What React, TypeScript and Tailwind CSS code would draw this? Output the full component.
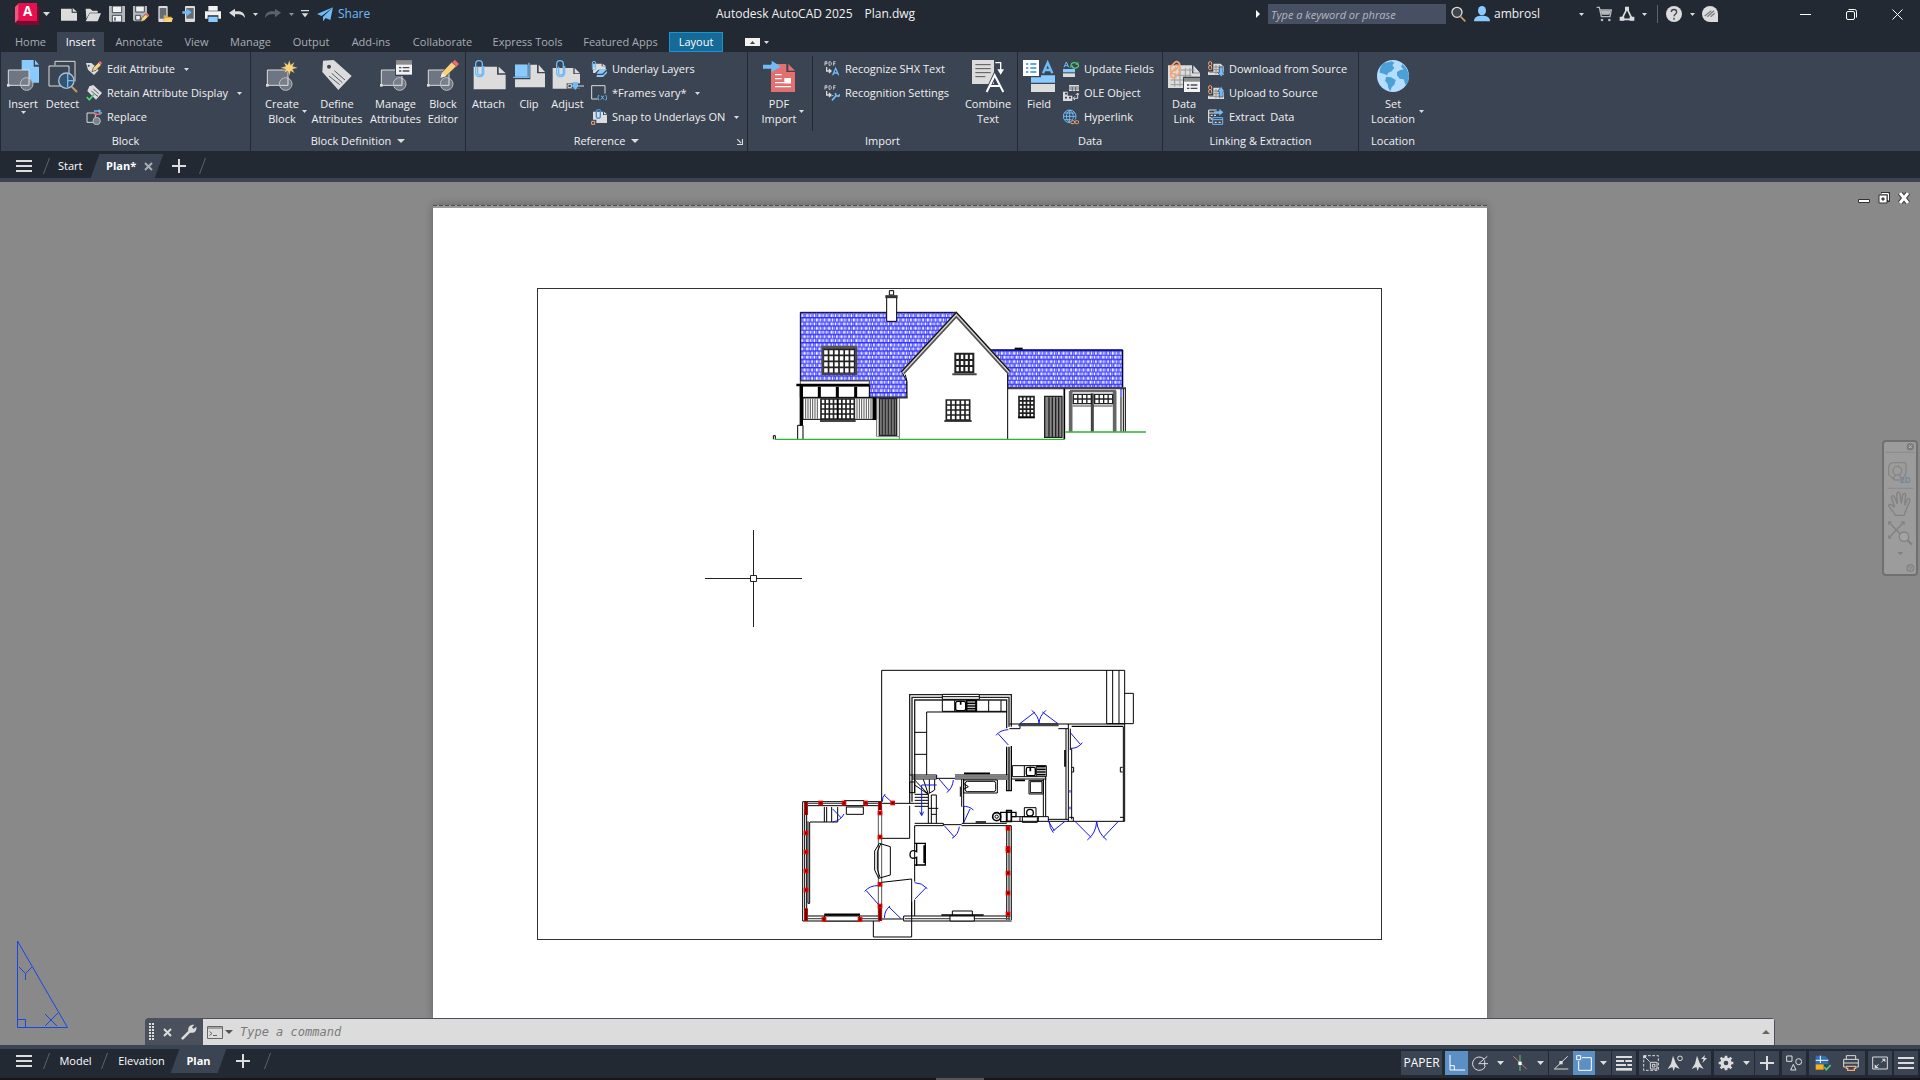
import type { ReactNode } from "react";

const LIGHT = "#dcdcdc";
const BLUE = "#6fbcf7";
const ORANGE = "#f0a878";
const PANEL = "#3b4453";

type IconProps = { children: ReactNode };

/** 16px icon on a 48-unit grid. */
function Small({ children }: IconProps) {
  return (
    <svg className="h-4 w-4 shrink-0" viewBox="0 0 48 48" fill="none" aria-hidden="true">
      {children}
    </svg>
  );
}

/** 32px icon on a 96-unit grid. */
function Large({ children }: IconProps) {
  return (
    <svg className="h-8 w-8 shrink-0 overflow-visible" viewBox="0 0 96 96" fill="none" aria-hidden="true">
      {children}
    </svg>
  );
}

function Caret() {
  return (
    <svg className="h-[3px] w-[5px] shrink-0" viewBox="0 0 5 3" aria-hidden="true">
      <path d="M0 0h5L2.500 3z" fill={LIGHT} />
    </svg>
  );
}

function BigCaret() {
  return (
    <svg className="h-1 w-2 shrink-0" viewBox="0 0 8 4" aria-hidden="true">
      <path d="M0 0h8L4 4z" fill={LIGHT} />
    </svg>
  );
}

/* Pieces shared by several ribbon icons */

const blockShape = (
  <>
    <path d="M4 30H66V76H4z" fill="#6f7683" stroke={LIGHT} strokeWidth="3" />
    <path d="M0 72h8v8H0z" fill={LIGHT} />
    <circle cx="59" cy="72" r="19" fill="#7a818d" fillOpacity=".85" stroke="#b9bdc4" strokeWidth="3" />
    <path d="M42 76H66V54" stroke={LIGHT} strokeWidth="3" />
  </>
);

const pageShape = <path d="M2 20H72V44H98V88H2zM77 20L98 40H77z" fill={LIGHT} />;

const clipShape = (
  <path
    d="M14 20V38a7 7 0 0 0 14 0V12a10 10 0 0 0-20 0V42a13 13 0 0 0 24 0V18"
    stroke={BLUE}
    strokeWidth="4"
  />
);

const chainShape = (
  <path
    d="M18 34l14-14a8 8 0 0 0-12-12L8 20v14a10 10 0 0 0 16 6M24 22L10 38a9 9 0 0 0 14 12l12-14V22a10 10 0 0 0-16-4"
    stroke={ORANGE}
    strokeWidth="5"
  />
);

/* Ribbon: large icons */

const insertIcon = (
  <Large>
    <path d="M44 0H80V20H96V68H44zM84 0L96 14H84z" fill="#8acbff" />
    {blockShape}
  </Large>
);
const detectIcon = (
  <Large>
    <path d="M24 4H84V64M24 4V16M6 18H66V78H6z" stroke={LIGHT} strokeWidth="3" />
    <circle cx="58" cy="62" r="23" fill="#35536f" stroke="#a9c3da" strokeWidth="4" />
    <path d="M62 42V82M62 62H80" stroke={BLUE} strokeWidth="4" />
    <path d="M74 80L90 96" stroke="#c99a63" strokeWidth="6" />
  </Large>
);
const createBlockIcon = (
  <Large>
    {blockShape}
    <path
      d="M70 0l4 14 12-8-6 13 16 4-16 5 6 12-12-7-4 15-5-15-12 7 6-12-16-5 16-4-6-13 12 8z"
      fill="#f9d27a"
      stroke={PANEL}
      strokeWidth="1"
    />
  </Large>
);
const defineIcon = (
  <Large>
    <path d="M6 2L38 0 92 48 52 90 4 36z" fill={LIGHT} />
    <circle cx="24" cy="20" r="6" fill={PANEL} />
    <path d="M40 32L72 60M32 40L64 68M24 48L56 74" stroke="#555d69" strokeWidth="3" />
  </Large>
);
const manageIcon = (
  <Large>
    {blockShape}
    <path d="M45 0H98V48H45z" fill={PANEL} />
    <path d="M48 2H96V44H48z" fill="#f2f2f2" />
    <path d="M48 2H96V14H48z" fill="#8b8b8b" />
    <path d="M57 23h7M68 23h20M57 33h7M68 33h20" stroke="#444c58" strokeWidth="4" />
  </Large>
);
const editorIcon = (
  <Large>
    {blockShape}
    <path d="M40 54l5-17L74 6l14 13-31 30z" fill="#f9d27a" stroke={PANEL} strokeWidth="2" />
    <path d="M40 54l5-17 12 12z" fill="#e8e8e8" />
    <path d="M76 6l8-6 12 12-8 8z" fill="#f26a6a" />
  </Large>
);
const attachIcon = (
  <Large>
    {pageShape}
    {clipShape}
  </Large>
);
const clipIcon = (
  <Large>
    <path d="M6 14H72V40H96V82H6zM77 14L96 36H77z" fill={LIGHT} />
    <path d="M6 14H44V50H6z" fill="#8acbff" />
    <path d="M48 8V54H0" stroke={PANEL} strokeWidth="8" />
    <path d="M48 8V52H0" stroke={BLUE} strokeWidth="4" />
  </Large>
);
const adjustIcon = (
  <Large>
    <path d="M2 24H64V42H84V86H2zM68 24L84 40H68z" fill={LIGHT} />
    <g transform="translate(6 0)">{clipShape}</g>
    <path d="M44 70H98V86H44z" fill={PANEL} />
    <path d="M48 73H58V83H48zM58 78H96" stroke={LIGHT} strokeWidth="3" />
    <path d="M62 66H78V80L70 90 62 80z" fill={BLUE} />
  </Large>
);
const pdfIcon = (
  <Large>
    <path d="M24 12H70V36H96V96H24zM76 12L96 32H76z" fill="#e27070" />
    <path d="M0 14H26V2L54 20 26 36V26H0z" fill={BLUE} />
    <path d="M36 44H56M36 56H56M36 68H84M36 80H84" stroke="#fff" strokeWidth="4" />
    <path d="M64 54H84V70H64z" fill="#fff" />
  </Large>
);
const combineIcon = (
  <Large>
    <path d="M0 0H66V72H0z" fill={LIGHT} />
    <path d="M10 14H56M10 26H56M10 38H56M10 50H40" stroke="#555" strokeWidth="3" />
    <path d="M70 8H86V32" stroke="#fff" strokeWidth="4" />
    <path d="M76 28H96L86 44z" fill="#fff" />
    <path d="M44 96L68 46 94 96M52 80H86" stroke={PANEL} strokeWidth="12" />
    <path d="M44 96L68 46 94 96M54 78H84" stroke="#fff" strokeWidth="6" />
  </Large>
);
const fieldIcon = (
  <Large>
    <path d="M0 0H48V48H0z" fill="#fff" />
    <path d="M9 12h7M9 24h7M9 36h7M22 12h18M22 24h18M22 36h18" stroke="#2f8fe0" strokeWidth="4" />
    <path d="M60 40L74 8 88 40M66 30H82" stroke={BLUE} strokeWidth="7" />
    <path d="M54 46H96V68H24V52H54z" fill="#8acbff" />
    <path d="M24 72H96V96H24z" fill={LIGHT} />
  </Large>
);
const dataLinkIcon = (
  <Large>
    <path d="M0 16H72V40H96V84H0zM76 16L96 38H76z" fill={LIGHT} />
    <path d="M30 30H80M20 46H70M8 60H60M8 74H50M20 50V80M36 24V80M52 24V80M66 24V50" stroke="#9a9a9a" strokeWidth="3" />
    {chainShape}
    <path d="M45 50H98V98H45z" fill={PANEL} />
    <path d="M48 54H96V96H48z" fill="#f2f2f2" />
    <path d="M48 54H96V65H48z" fill="#8b8b8b" />
    <path d="M57 75h7M68 75h20M57 85h7M68 85h20" stroke="#444c58" strokeWidth="4" />
  </Large>
);
const globeIcon = (
  <Large>
    <circle cx="48" cy="48" r="48" fill="#b3deff" />
    <path
      d="M20 10L44 4l8 4-6 8 6 8-8 10-10 4-4 8-8-4-14-4C8 24 14 14 20 10zM28 50l14 2 14 8-4 14-8 8-4 12-6-10-2-12-8-10zM60 36l10-6 10-2-8-8 4-8c10 8 18 20 20 34l-2 20-8 10-6-18-12-2-8-10z"
      fill="#4d9fd8"
    />
  </Large>
);

/* Ribbon: small icons */

const editAttrIcon = (
  <Small>
    <path d="M0 6H16L26 14 38 28 24 42 6 26z" fill={LIGHT} />
    <circle cx="8" cy="14" r="3" fill={PANEL} />
    <path d="M18 32l4-12L38 4l8 8-16 16z" fill="#f9d27a" stroke={PANEL} strokeWidth="2" />
    <path d="M38 4l4-4 6 6-4 6z" fill="#f26a6a" />
  </Small>
);
const retainIcon = (
  <Small>
    <path d="M10 4L22 0 48 24 30 44 4 18z" fill={LIGHT} />
    <path d="M22 12L38 26M16 18L32 32M30 30l6 4" stroke="#555d69" strokeWidth="3" />
    <path d="M2 36l8 8 14-16" stroke="#4fce74" strokeWidth="5" />
  </Small>
);
const replaceIcon = (
  <Small>
    <path d="M3 12H28V40H3z" stroke={LIGHT} strokeWidth="3" />
    <circle cx="32" cy="36" r="11" fill="#7a818d" stroke="#b9bdc4" strokeWidth="3" />
    <path d="M24 6H42M48 12L38 12" stroke={BLUE} strokeWidth="4" />
    <path d="M44 16H28" stroke="#f26a6a" strokeWidth="4" />
    <path d="M38 0l8 6-8 5z" fill={BLUE} />
    <path d="M32 10l-8 6 8 6z" fill="#f26a6a" />
  </Small>
);
const layersIcon = (
  <Small>
    <path d="M6 8H32V16H44V26H22L12 36H6zM35 8l9 7h-9z" fill={LIGHT} />
    <path d="M28 24H48L34 38H16zM18 42H36L48 30V36L36 48H16z" fill="#8acbff" />
    <path d="M4 6V22a4 4 0 0 0 10 0V6a4 4 0 0 0-10 0M9 8V20" stroke={BLUE} strokeWidth="3" />
  </Small>
);
const framesIcon = (
  <Small>
    <path d="M20 42H2V2H42V26" stroke={LIGHT} strokeWidth="3" />
    <path d="M24 30c-4 6-4 10 0 16M44 30c4 6 4 10 0 16M30 33c6 0 4 10 10 10M39 33c-6 0-4 10-10 10" stroke={BLUE} strokeWidth="3" />
  </Small>
);
const snapIcon = (
  <Small>
    <path d="M6 8H36V18H48V42H16V32H6zM39 8l9 8h-9z" fill={LIGHT} />
    <path d="M16 4V22a6 6 0 0 0 12 0V6a5 5 0 0 0-10 0" stroke="#3f8fd0" strokeWidth="4" />
    <path d="M2 37H11V46H2z" stroke={ORANGE} strokeWidth="3" />
  </Small>
);
const pdfTag = (
  <path d="M3 14V2H9V8H3M15 2V13M15 2.500H19L22 5V10L19 13H15M29 14V2H35M29 8H34" stroke={LIGHT} strokeWidth="2.500" />
);
const shxIcon = (
  <Small>
    {pdfTag}
    <path d="M8 18V30H20M15 24l6 6-6 6" stroke={LIGHT} strokeWidth="4" />
    <path d="M26 43L35 22 44 43M29 36H41" stroke={BLUE} strokeWidth="4" />
  </Small>
);
const recogIcon = (
  <Small>
    {pdfTag}
    <path d="M8 18V30H20M15 24l6 6-6 6" stroke={LIGHT} strokeWidth="4" />
    <path d="M24 46L38 30M34 24l2 8 8 2 4-6" stroke={BLUE} strokeWidth="5" />
    <path d="M24 34l4-4" stroke={LIGHT} strokeWidth="3" />
  </Small>
);
const updateIcon = (
  <Small>
    <path d="M3 19L10 3 17 19M5 14H15" stroke={BLUE} strokeWidth="3" />
    <path d="M24 12a10 8 0 0 1 18-4M46 10a10 8 0 0 1-19 6" stroke="#4fce74" strokeWidth="4" />
    <path d="M46 2v9h-9zM22 22v-9h9z" fill="#4fce74" />
    <path d="M0 24H36V34H0z" fill="#8acbff" />
    <path d="M0 37H36V48H0z" fill={LIGHT} />
  </Small>
);
const oleIcon = (
  <Small>
    <path d="M18 0H48V18H18z" fill={LIGHT} />
    <path d="M18 6H48M18 12H48M28 6V18M38 6V18" stroke={PANEL} strokeWidth="2" />
    <path d="M0 20H14V32H28V48H0z" fill={LIGHT} />
    <path d="M6 26h6M6 38h6M18 38h6" stroke={PANEL} strokeWidth="5" />
    <path d="M32 40H44V26M38 30l6-6 4 6M36 34l-6 6 6 5" stroke={LIGHT} strokeWidth="3" />
  </Small>
);
const hyperIcon = (
  <Small>
    <circle cx="20" cy="22" r="19" stroke={BLUE} strokeWidth="3" />
    <path d="M20 3V41M2 22H38M5 12H35M5 32H26M20 3c-13 12-13 26 0 38M20 3c13 12 13 20 8 30" stroke={BLUE} strokeWidth="3" />
    <path d="M22 32H48V48H20z" fill={PANEL} />
    <rect x="23" y="35" width="12" height="9" rx="4" stroke={ORANGE} strokeWidth="3" />
    <rect x="36" y="35" width="11" height="9" rx="4" stroke={ORANGE} strokeWidth="3" />
  </Small>
);
const linkedSheet = (
  <>
    <path d="M16 8H38L48 18V42H0V32H16z" fill={LIGHT} />
    <path d="M16 18H44M16 26H44M4 34H44M24 12V40M34 12V40" stroke="#8e8e8e" strokeWidth="3" />
    <rect x="2" y="2" width="9" height="12" rx="4" stroke={ORANGE} strokeWidth="3" />
    <rect x="2" y="14" width="9" height="12" rx="4" stroke={ORANGE} strokeWidth="3" />
  </>
);
const downloadIcon = (
  <Small>
    {linkedSheet}
    <path d="M34 18H45V34H50L39.500 48 29 34H34z" fill={BLUE} stroke={PANEL} strokeWidth="2" />
  </Small>
);
const uploadIcon = (
  <Small>
    {linkedSheet}
    <path d="M34 36H45V20H50L39.500 4 29 20H34z" fill={BLUE} stroke={PANEL} strokeWidth="2" />
  </Small>
);
const extractIcon = (
  <Small>
    <path d="M26 3H2V40H12M2 12H36M2 26H10M2 3V40" stroke={LIGHT} strokeWidth="3" />
    <path d="M18 7H34V0L46 10 34 20V13H18z" fill={BLUE} />
    <path d="M8 19h6M18 19h6M8 30h4" stroke={LIGHT} strokeWidth="4" />
    <path d="M14 26H44V46H14zM14 32H44" stroke={BLUE} strokeWidth="3" />
    <path d="M20 40h6M32 40h6" stroke={LIGHT} strokeWidth="4" />
  </Small>
);

type ToolProps = {
  icon: ReactNode;
  lines: string[];
  width: string;
  below?: boolean;
  side?: boolean;
};

function BigTool({ icon, lines, width, below, side }: ToolProps) {
  return (
    <button type="button" className={`relative flex shrink-0 flex-col items-center pt-2 ${width}`}>
      {icon}
      <span className="mt-1 flex flex-col items-center leading-[15px] whitespace-nowrap">
        {lines.map((line) => (
          <span key={line}>{line}</span>
        ))}
      </span>
      {below && <Caret />}
      {side && (
        <span className="absolute top-[58px] right-0">
          <Caret />
        </span>
      )}
    </button>
  );
}

type RowProps = { icon: ReactNode; label: string; caret?: boolean };

function ToolRow({ icon, label, caret }: RowProps) {
  return (
    <button type="button" className="flex h-6 items-center gap-[5px] whitespace-pre">
      {icon}
      <span>{label}</span>
      {caret && (
        <span className="ml-1">
          <Caret />
        </span>
      )}
    </button>
  );
}

type PanelProps = {
  title: string;
  width: string;
  expandable?: boolean;
  launcher?: boolean;
  children: ReactNode;
};

function RibbonPanel({ title, width, expandable, launcher, children }: PanelProps) {
  return (
    <section className={`relative flex shrink-0 flex-col border-r border-[#222933] ${width}`}>
      <div className="flex h-[79px]">{children}</div>
      <h2 className="flex h-5 items-center justify-center gap-1.5 whitespace-nowrap">
        {title}
        {expandable && <BigCaret />}
      </h2>
      {launcher && (
        <button type="button" aria-label={`${title} settings`} className="absolute right-1 bottom-1.5">
          <svg className="h-[6px] w-[6px]" viewBox="0 0 6 6" aria-hidden="true">
            <path d="M0 0l4 4M5.500 0V5.500H0" stroke={LIGHT} strokeWidth="1.200" fill="none" />
          </svg>
        </button>
      )}
    </section>
  );
}

function ToolColumn({ children }: { children: ReactNode }) {
  return <div className="flex flex-col items-start pt-[5px]">{children}</div>;
}

const TABS = [
  { name: "Home", width: "w-[53px]" },
  { name: "Insert", width: "w-[47px]" },
  { name: "Annotate", width: "w-[70px]" },
  { name: "View", width: "w-[45px]" },
  { name: "Manage", width: "w-[63px]" },
  { name: "Output", width: "w-[58px]" },
  { name: "Add-ins", width: "w-[62px]" },
  { name: "Collaborate", width: "w-[81px]" },
  { name: "Express Tools", width: "w-[89px]" },
  { name: "Featured Apps", width: "w-[97px]" },
  { name: "Layout", width: "w-[54px]" },
];

function IconButton({ label, width, children }: { label: string; width: string; children: ReactNode }) {
  return (
    <button type="button" aria-label={label} className={`flex shrink-0 items-center justify-center ${width}`}>
      {children}
    </button>
  );
}

function TitleBar() {
  return (
    <header className="flex h-7 items-center">
      <div className="flex w-[716px] shrink-0 items-center pl-[15px]">
        <IconButton label="Application menu" width="w-6">
          <svg className="h-[22px] w-6" viewBox="0 0 72 66" aria-hidden="true">
            <path d="M0 12L12 0V48L0 60z" fill="#f0557d" />
            <path d="M12 52H62V6l10 6V66H12L0 60z" fill="#7a0b2e" />
            <path d="M10 0H66V54H10z" fill="#e51050" />
            <text x="38" y="40" textAnchor="middle" fontSize="40" fontWeight="700" fill="#fff" fontFamily="Open Sans, sans-serif">
              A
            </text>
          </svg>
        </IconButton>
        <IconButton label="Open menu" width="mr-1 w-3.5">
          <svg className="h-1 w-[7px]" viewBox="0 0 7 4" aria-hidden="true">
            <path d="M0 0h7L3.500 4z" fill={LIGHT} />
          </svg>
        </IconButton>
        <IconButton label="New" width="w-6">
          <Small>
            <path d="M0 8H32V20H48V44H0zM35 6L48 17H35z" fill={LIGHT} />
          </Small>
        </IconButton>
        <IconButton label="Open" width="w-6">
          <Small>
            <path d="M2 8H16L22 14H38V20H14L4 38z" fill={LIGHT} />
            <path d="M14 22H48L38 46H2z" fill={LIGHT} />
          </Small>
        </IconButton>
        <IconButton label="Save" width="w-6">
          <Small>
            <path d="M0 0H48V48H4L0 44z" fill="#b5b8bd" />
            <path d="M10 0H38V20H10zM10 28H38V48H10z" fill="#f1f1f1" stroke="#444b56" strokeWidth="3" />
            <path d="M18 34v10" stroke="#444b56" strokeWidth="4" />
          </Small>
        </IconButton>
        <IconButton label="Save As" width="w-6">
          <Small>
            <path d="M0 0H42V26L24 46H4L0 42z" fill="#b5b8bd" />
            <path d="M8 0H34V18H8zM8 28H22V42H8z" fill="#f1f1f1" stroke="#444b56" strokeWidth="3" />
            <path d="M22 48l4-12 12-12 8 8-12 12z" fill="#f9d27a" stroke="#222933" strokeWidth="2" />
            <path d="M38 24l4-4 8 8-4 4z" fill="#f26a6a" />
          </Small>
        </IconButton>
        <IconButton label="Open from Web & Mobile" width="w-6">
          <Small>
            <rect x="4" y="0" width="28" height="48" rx="3" fill={LIGHT} />
            <path d="M8 6H28V38H8z" fill="#666c75" />
            <path d="M20 28H30L34 32H44V48H20z" fill="#d9a94a" />
            <path d="M24 36H48L44 48H20z" fill="#f9d27a" />
          </Small>
        </IconButton>
        <IconButton label="Save to Web & Mobile" width="w-6">
          <Small>
            <rect x="12" y="0" width="30" height="48" rx="3" fill={LIGHT} />
            <path d="M16 6H38V38H16z" fill="#666c75" />
            <path d="M4 16H18V8L32 19 18 30V23H4z" fill={BLUE} />
          </Small>
        </IconButton>
        <IconButton label="Plot" width="w-6">
          <Small>
            <path d="M10 0H38V14H10zM0 16H48V38H40V28H8V38H0z" fill="#f1f1f1" />
            <path d="M10 32H38V48H10z" fill="#8acbff" />
          </Small>
        </IconButton>
        <IconButton label="Undo" width="w-6">
          <Small>
            <path d="M0 20L18 8V16H28C40 16 48 24 48 36 42 28 36 25 28 25H18V34z" fill={LIGHT} />
          </Small>
        </IconButton>
        <IconButton label="Undo history" width="w-3">
          <Caret />
        </IconButton>
        <IconButton label="Redo" width="w-6">
          <Small>
            <path d="M48 20L30 8V16H20C8 16 0 24 0 36 6 28 12 25 20 25H30V34z" fill="#5b626d" />
          </Small>
        </IconButton>
        <IconButton label="Redo history" width="w-3">
          <svg className="h-[3px] w-[5px]" viewBox="0 0 5 3" aria-hidden="true">
            <path d="M0 0h5L2.500 3z" fill="#8b9098" />
          </svg>
        </IconButton>
        <IconButton label="Customize Quick Access Toolbar" width="w-4">
          <svg className="h-2 w-2" viewBox="0 0 24 24" aria-hidden="true">
            <path d="M0 0H24V4H0zM2 10H22L12 22z" fill={LIGHT} />
          </svg>
        </IconButton>
        <button type="button" className="ml-1 flex items-center gap-[5px] text-xs text-[#6fbcf7]">
          <Small>
            <path d="M48 4L0 24 14 30zM48 4L18 32V46L26 36 40 42z" fill={BLUE} />
          </Small>
          Share
        </button>
      </div>
      <h1 className="flex gap-3 text-xs whitespace-nowrap">
        <span>Autodesk AutoCAD 2025</span>
        <span>Plan.dwg</span>
      </h1>
      <div className="ml-auto flex items-center">
        <svg className="mr-2 h-2 w-1" viewBox="0 0 4 8" aria-hidden="true">
          <path d="M0 0L4 4 0 8z" fill="#fff" />
        </svg>
        <input
          type="text"
          aria-label="Search"
          placeholder="Type a keyword or phrase"
          className="h-5 w-[178px] bg-[#474f62] px-[3px] italic placeholder:text-[#b4b8c0]"
        />
        <IconButton label="Search" width="w-6">
          <Small>
            <circle cx="21" cy="19" r="15" fill="#3f444c" stroke={LIGHT} strokeWidth="4" />
            <path d="M32 32L46 46" stroke="#c99a63" strokeWidth="5" />
          </Small>
        </IconButton>
        <button type="button" className="flex w-24 items-center gap-1 pl-1">
          <Small>
            <ellipse cx="24" cy="14" rx="12" ry="14" fill="#8acbff" />
            <path d="M0 46C0 34 8 30 18 29H30C40 30 48 34 48 46z" fill="#8acbff" />
          </Small>
          <span className="text-xs">ambrosl</span>
        </button>
        <IconButton label="Account menu" width="w-[30px]">
          <Caret />
        </IconButton>
        <IconButton label="App Store" width="w-4">
          <Small>
            <path d="M2 4H10L16 32H42L46 12H12" stroke="#b5b8bd" strokeWidth="4" />
            <path d="M14 14H44L40 26H17z" fill="#b5b8bd" />
            <circle cx="18" cy="42" r="4" fill="#b5b8bd" />
            <circle cx="40" cy="42" r="4" fill="#b5b8bd" />
          </Small>
        </IconButton>
        <IconButton label="Autodesk App" width="w-[30px]">
          <Small>
            <path d="M24 8L8 40H40z" stroke={LIGHT} strokeWidth="5" />
            <path d="M18 2H30V14H18zM2 32H16V44H2zM32 32H46V44H32z" fill={LIGHT} />
          </Small>
        </IconButton>
        <IconButton label="Autodesk App menu" width="w-[5px]">
          <Caret />
        </IconButton>
        <span className="mr-2 ml-2.5 h-[18px] w-px bg-[#5b626d]" />
        <IconButton label="Help" width="w-4">
          <Small>
            <circle cx="24" cy="24" r="24" fill={LIGHT} />
            <path d="M16 18C16 8 32 8 32 18 32 25 24 24 24 31M24 35v6" stroke="#3b4453" strokeWidth="4" />
          </Small>
        </IconButton>
        <IconButton label="Help menu" width="w-5">
          <Caret />
        </IconButton>
        <IconButton label="Feedback" width="w-4">
          <Small>
            <path d="M24 0A24 24 0 0 0 24 48H48V24A24 24 0 0 0 24 0z" fill={LIGHT} />
            <path d="M8 30L28 14M16 32L36 14M26 32L38 22" stroke="#7b8088" strokeWidth="4" />
          </Small>
        </IconButton>
        <div className="ml-16 flex">
          <IconButton label="Minimize" width="w-[46px]">
            <svg className="h-[11px] w-[11px]" viewBox="0 0 11 11" aria-hidden="true">
              <path d="M0 5h11v1H0z" fill="#fff" />
            </svg>
          </IconButton>
          <IconButton label="Restore" width="w-[46px]">
            <svg className="h-[11px] w-[11px]" viewBox="0 0 11 11" fill="none" aria-hidden="true">
              <path d="M2.500.5h6a2 2 0 0 1 2 2v6" stroke="#fff" />
              <rect x=".5" y="2.500" width="8" height="8" rx="1.500" stroke="#fff" />
            </svg>
          </IconButton>
          <IconButton label="Close" width="w-[46px]">
            <svg className="h-[11px] w-[11px]" viewBox="0 0 11 11" aria-hidden="true">
              <path d="M.5.5l10 10M10.500.5l-10 10" stroke="#fff" />
            </svg>
          </IconButton>
        </div>
      </div>
    </header>
  );
}

function RibbonTabs() {
  return (
    <nav className="flex h-5 items-stretch pl-1">
      {TABS.map((tab) => {
        const look =
          tab.name === "Insert"
            ? "bg-[#3b4453] text-white"
            : tab.name === "Layout"
              ? "border border-[#1795d4] bg-[#166a98] text-white"
              : "text-[#a9adb3]";
        return (
          <button
            key={tab.name}
            type="button"
            className={`flex shrink-0 items-center justify-center whitespace-nowrap ${tab.width} ${look}`}
          >
            {tab.name}
          </button>
        );
      })}
      <button type="button" aria-label="Minimize ribbon" className="ml-[22px] flex items-center gap-1">
        <span className="flex h-2 w-[15px] items-center justify-center bg-[#f1f1f1]">
          <svg className="h-[3px] w-[5px]" viewBox="0 0 5 3" aria-hidden="true">
            <path d="M0 3h5L2.500 0z" fill="#444" />
          </svg>
        </span>
        <Caret />
      </button>
    </nav>
  );
}

function Ribbon() {
  return (
    <div className="flex h-[99px] overflow-hidden border-l border-[#222933] bg-[#3b4453] text-[#f1f1f1]">
      <RibbonPanel title="Block" width="w-[250px]">
        <BigTool icon={insertIcon} lines={["Insert"]} width="w-[44px]" below />
        <BigTool icon={detectIcon} lines={["Detect"]} width="w-[35px]" />
        <span className="w-1.5 shrink-0" />
        <ToolColumn>
          <ToolRow icon={editAttrIcon} label="Edit Attribute" caret />
          <ToolRow icon={retainIcon} label="Retain Attribute Display" caret />
          <ToolRow icon={replaceIcon} label="Replace" />
        </ToolColumn>
      </RibbonPanel>
      <RibbonPanel title="Block Definition" width="w-[215px]" expandable>
        <span className="w-1.5 shrink-0" />
        <BigTool icon={createBlockIcon} lines={["Create", "Block"]} width="w-[50px]" side />
        <BigTool icon={defineIcon} lines={["Define", "Attributes"]} width="w-[60px]" />
        <BigTool icon={manageIcon} lines={["Manage", "Attributes"]} width="w-[57px]" />
        <BigTool icon={editorIcon} lines={["Block", "Editor"]} width="w-[38px]" />
      </RibbonPanel>
      <RibbonPanel title="Reference" width="w-[282px]" expandable launcher>
        <BigTool icon={attachIcon} lines={["Attach"]} width="w-[45px]" />
        <BigTool icon={clipIcon} lines={["Clip"]} width="w-[36px]" />
        <BigTool icon={adjustIcon} lines={["Adjust"]} width="w-[41px]" />
        <span className="w-[3px] shrink-0" />
        <ToolColumn>
          <ToolRow icon={layersIcon} label="Underlay Layers" />
          <ToolRow icon={framesIcon} label="*Frames vary*" caret />
          <ToolRow icon={snapIcon} label="Snap to Underlays ON" caret />
        </ToolColumn>
      </RibbonPanel>
      <RibbonPanel title="Import" width="w-[270px]">
        <span className="w-1.5 shrink-0" />
        <BigTool icon={pdfIcon} lines={["PDF", "Import"]} width="w-[50px]" side />
        <span className="mt-1 mr-[11px] ml-2 w-px shrink-0 bg-[#222933]" />
        <div className="w-[140px]">
          <ToolColumn>
            <ToolRow icon={shxIcon} label="Recognize SHX Text" />
            <ToolRow icon={recogIcon} label="Recognition Settings" />
          </ToolColumn>
        </div>
        <BigTool icon={combineIcon} lines={["Combine", "Text"]} width="w-[48px]" />
      </RibbonPanel>
      <RibbonPanel title="Data" width="w-[145px]">
        <BigTool icon={fieldIcon} lines={["Field"]} width="w-[42px]" />
        <span className="w-[3px] shrink-0" />
        <ToolColumn>
          <ToolRow icon={updateIcon} label="Update Fields" />
          <ToolRow icon={oleIcon} label="OLE Object" />
          <ToolRow icon={hyperIcon} label="Hyperlink" />
        </ToolColumn>
      </RibbonPanel>
      <RibbonPanel title="Linking & Extraction" width="w-[196px]">
        <BigTool icon={dataLinkIcon} lines={["Data", "Link"]} width="w-[42px]" />
        <span className="w-[3px] shrink-0" />
        <ToolColumn>
          <ToolRow icon={downloadIcon} label="Download from Source" />
          <ToolRow icon={uploadIcon} label="Upload to Source" />
          <ToolRow icon={extractIcon} label="Extract  Data" />
        </ToolColumn>
      </RibbonPanel>
      <section className="flex w-[68px] shrink-0 flex-col">
        <div className="flex h-[79px] justify-center">
          <BigTool icon={globeIcon} lines={["Set", "Location"]} width="w-[62px]" side />
        </div>
        <h2 className="flex h-5 items-center justify-center">Location</h2>
      </section>
    </div>
  );
}

function Slash() {
  return (
    <svg className="h-4 w-[7px] shrink-0" viewBox="0 0 7 16" aria-hidden="true">
      <path d="M6.500 0L.5 16" stroke="#5b626d" />
    </svg>
  );
}

function Burger() {
  return (
    <svg className="h-3 w-4" viewBox="0 0 16 12" aria-hidden="true">
      <path d="M0 0h16v2H0zM0 5h16v2H0zM0 10h16v2H0z" fill={LIGHT} />
    </svg>
  );
}

function Plus() {
  return (
    <svg className="h-3.5 w-3.5" viewBox="0 0 14 14" aria-hidden="true">
      <path d="M6 0h2v6h6v2H8v6H6V8H0V6h6z" fill={LIGHT} />
    </svg>
  );
}

function FileTabs() {
  return (
    <nav className="flex h-[31px] items-start border-b-4 border-[#3b4453] pt-[3px] text-white">
      <div className="flex h-6 items-center">
        <IconButton label="File tab menu" width="w-[43px] pl-[5px]">
          <Burger />
        </IconButton>
        <Slash />
        <button type="button" className="flex w-[45px] items-center pl-2">
          Start
        </button>
        <div className="relative flex h-6 w-[64px] items-center gap-2 pl-[11px]">
          <span className="absolute inset-0 -skew-x-[20deg] bg-[#3b4453]" />
          <button type="button" className="relative font-bold">
            Plan*
          </button>
          <button type="button" aria-label="Close Plan" className="relative">
            <svg className="h-[9px] w-[9px]" viewBox="0 0 9 9" aria-hidden="true">
              <path d="M1 1l7 7M8 1l-7 7" stroke="#a9adb3" strokeWidth="2" />
            </svg>
          </button>
        </div>
        <IconButton label="New drawing" width="w-[40px]">
          <Plus />
        </IconButton>
        <Slash />
      </div>
    </nav>
  );
}

type GridProps = {
  x: number;
  y: number;
  w: number;
  h: number;
  cols: number;
  rows: number;
  stroke?: number;
};

/** Multi-pane window: outer frame plus evenly spaced glazing bars. */
function Panes({ x, y, w, h, cols, rows, stroke = 4 }: GridProps) {
  let d = `M${x} ${y}h${w}v${h}h${-w}z`;
  for (let c = 1; c < cols; c++) d += `M${x + (w * c) / cols} ${y}v${h}`;
  for (let r = 1; r < rows; r++) d += `M${x} ${y + (h * r) / rows}h${w}`;
  return <path d={d} fill="#fff" stroke="#222" strokeWidth={stroke} />;
}

function Elevation() {
  return (
    <g transform="translate(760 280) scale(.33333)" fill="none" stroke="#000" strokeWidth="3">
      <path d="M121 97H589L428 280 441 305V352H328V303H121z" fill="url(#tiles)" />
      <path d="M693 210H1088V322H743V270z" fill="url(#tiles)" stroke="#0000ff" />
      <path d="M693 210H1088V325" />
      <path d="M743 325H1098" stroke="#444" strokeWidth="6" />
      <path d="M380 52H410V124H380zM388 32H401V45H388z" fill="#fff" />
      <path d="M376 50H413" stroke="#333" strokeWidth="9" />
      <path d="M764 206H788" strokeWidth="6" />

      <path d="M589 108L743 278V478H418V352H441V305L432 278z" fill="#fff" stroke="none" />
      <path d="M743 278V478M441 352V305L436 284" />
      <path d="M428 278L589 104 748 278" stroke="#555" strokeWidth="14" />
      <path d="M428 278L589 104 748 278" stroke="#ddd" strokeWidth="4" />
      <path d="M423 276L589 97 750 274" />
      <path d="M328 353H443" stroke="#333" strokeWidth="5" />

      <path d="M184 202H291" stroke="#555" strokeWidth="9" />
      <Panes x={190} y={208} w={94} h={72} cols={6} rows={4} stroke={5} />
      <path d="M188 205V282H289V205" stroke="#444" strokeWidth="6" />

      <Panes x={586} y={221} w={54} h={56} cols={4} rows={3} stroke={6} />
      <path d="M577 283H650M553 423H635" stroke="#444" strokeWidth="6" />
      <Panes x={559} y={360} w={70} h={60} cols={5} rows={4} stroke={5} />
      <Panes x={777} y={350} w={45} h={62} cols={4} rows={5} stroke={5} />
      <path d="M774 412H824" strokeWidth="5" />

      <path d="M121 318H328V352H121zM113 436V478M129 436V478M113 436H129" fill="#fff" />
      <path d="M121 303H328V314H121z" fill="#fff" stroke="#555" />
      <path d="M109 315H328" strokeWidth="8" />
      <path d="M124 318V436" strokeWidth="10" />
      <path d="M178 320V352M232 320V352M287 320V352" strokeWidth="9" />
      <path d="M129 354H350V418H129z" fill="#fff" />
      <path
        d="M137 356V416M144 356V416M151 356V416M158 356V416M165 356V416M172 356V416M291 356V416M298 356V416M305 356V416M312 356V416M319 356V416M326 356V416M333 356V416"
        stroke="#555"
      />
      <path d="M344 354V420" strokeWidth="13" />
      <Panes x={183} y={357} w={100} h={60} cols={8} rows={4} stroke={5} />
      <path d="M233 357V417" strokeWidth="5" />
      <path d="M180 423H287" stroke="#444" strokeWidth="6" />
      <path d="M350 354V470M418 354V470" stroke="#666" />
      <path d="M358 356H410V466H358z" fill="#777" stroke="#222" strokeWidth="4" />
      <path d="M367 358V464M376 358V464M385 358V464M394 358V464M403 358V464" stroke="#222" />
      <path d="M352 470H418V478" stroke="#777" />

      <path d="M854 349H906V472H854z" fill="#888" stroke="#222" strokeWidth="4" />
      <path d="M867 352V470M877 352V470M887 352V470M896 352V470" stroke="#222" strokeWidth="4" />
      <path d="M913 326V478" strokeWidth="5" />
      <path d="M930 333H1068" stroke="#666" strokeWidth="7" />
      <path d="M932 333V455M1064 333V455" stroke="#666" strokeWidth="11" />
      <path d="M997 340V455" stroke="#444" strokeWidth="9" />
      <Panes x={940} y={343} w={54} h={28} cols={4} rows={2} />
      <Panes x={1004} y={343} w={54} h={28} cols={4} rows={2} />
      <path d="M938 378H1058" stroke="#444" />
      <path d="M1083 326V350" stroke="#0000ff" />
      <path d="M1083 350V455M1090 326V455M1096 326V455" />
      <path d="M40 478V467H46V478" />
      <path d="M44 478H914M916 456H1158" stroke="#2db52d" strokeWidth="4" />
    </g>
  );
}

const POSTS = [
  [48, 519], [48, 576], [48, 633], [48, 690], [92, 429], [162, 429], [227, 429], [308, 429],
  [270, 459], [270, 531], [270, 673], [270, 738], [102, 778], [210, 778],
  [654, 505], [654, 565], [654, 572], [654, 639], [654, 699], [654, 762],
];

function FloorPlan() {
  return (
    <g transform="translate(790 660) scale(.33333)" fill="none" stroke="#000" strokeWidth="3">
      {/* terrace and outline */}
      <path d="M275 425V31H1004V190M1004 100H1030V191H950V31M968 31V190M987 31V190" />
      <path d="M250 783V831H365V783" />

      {/* outer walls */}
      <path d="M359 430V104H664V200M374 400V120H650V205M366 425V112H657V200" stroke="#222" strokeWidth="4" />
      <path d="M650 260V345M664 258V392H650V360M657 260V390" strokeWidth="4" />
      <path d="M658 192H690V206H658M805 192H1004V484M805 206H835M835 192V484M828 206V478M841 206V270M845 265V478M1000 200V484" />
      <path d="M845 199H1000M690 192H805" strokeWidth="4" />
      <path d="M685 196H806" stroke="#444" strokeWidth="5" />
      <path d="M664 484H775V470H664M690 484V470M745 484V470M775 484H1004M775 478H835" />
      <path d="M838 472H850V484M990 472H1003M845 322H851V336H845M998 322H991V336H998" />
      <path d="M359 345H440V357H366M495 345H655M495 357H655M366 351H440M495 351H655M440 355H495M359 366V398H374V366z" />
      <path d="M374 490H460V497H374M515 490H650M515 497H664M460 494H515" />
      <path d="M515 357V440M521 357V490M511 380V410M521 440V488" />
      <path d="M374 497V665M374 720V768M365 725V768" />
      <path d="M650 497V780M664 497V780M657 497V780" stroke="#333" strokeWidth="4" />
      <path d="M650 460V484H664V452H650z" strokeWidth="5" />
      <path d="M38 425H275M38 783H270M48 437H265M38 425V783M50 437V770M54 484V730M59 486V730H54M44 425V783" />
      <path d="M265 437V783M275 437V783" stroke="#555" />
      <path d="M275 430H374M275 535H359V437M270 768H48M341 783H665M341 768H660M341 768V783" />
      <path d="M345 776H660M48 776H265M48 430H265" stroke="#555" strokeWidth="4" />
      <path d="M275 667L365 657V783V783M275 777H341" />

      {/* windows */}
      <path d="M457 103H568V118H457zM457 110H568M480 768H553V783H480zM103 768H208V783H103zM103 765H208M163 422H222V437H163z" fill="#fff" />
      <path d="M103 763H210M454 765H581M522 340H600M557 486H588M675 361H705M825 270V320" strokeWidth="5" />
      <path d="M487 765V753H547V765M169 441H220V463H169zM697 470H742V487H697z" />

      {/* kitchen, utility and bathroom */}
      <path d="M410 345V156H650M374 217H410M374 283H410M457 121V154M494 121V154M560 121V154M596 121V154M633 121V154M457 154H650" />
      <rect x="497" y="124" width="30" height="28" rx="6" strokeWidth="4" />
      <path d="M530 122H558V153H530zM530 130H558M530 138H558M530 146H558M512 122V134" strokeWidth="5" />
      <path d="M667 317H769V350H667zM703 317V350M739 317V350M767 350V470M760 357V470M664 357H769" />
      <rect x="709" y="322" width="27" height="25" rx="5" strokeWidth="4" />
      <path d="M741 320H767M741 328H767M741 336H767M741 344H767M721 320V334" strokeWidth="5" />
      <path d="M717 361H760V402H717zM721 365H756V398H721z" />
      <path d="M521 360H622V399H521z" />
      <rect x="526" y="364" width="91" height="31" rx="6" />
      <path d="M521 370L535 380 521 388" />
      <circle cx="620" cy="470" r="12" strokeWidth="5" />
      <circle cx="620" cy="470" r="5" />
      <path d="M632 457H650V485H632zM650 457H678V470H664" strokeWidth="4" />
      <path d="M703 443H738V470H703z" />
      <circle cx="720" cy="458" r="10" strokeWidth="4" />

      {/* stairs, fireplace and hearth */}
      <path d="M374 403H415M374 412H415M374 421H415M374 430H415M374 439H415M415 403V490M374 375L415 403 400 358M374 360L415 403M418 358V400L434 390V358M424 405V490M439 405V490M424 405H439M415 445H445M424 463H439" />
      <path d="M268 550L301 560V645L266 655 254 630V573zM262 575V628L270 652M262 575L272 552" />
      <path d="M374 550H406V615H374M402 556V609M380 548V575C366 568 360 574 360 584S366 598 380 592V618" strokeWidth="4" />
      <path d="M60 486H125V441M103 441V486M110 441V486M143 441V486H125" />

      {/* doors */}
      <g stroke="#1414f0">
        <path d="M688 192L735 156M747 190Q746 168 725 151M805 192L757 156M747 190Q748 168 768 151" />
        <path d="M655 255L625 222M618 226Q630 210 655 209M841 218L872 254M841 265Q864 266 877 248" />
        <path d="M447 357L477 392M490 360Q488 384 470 398M463 497L492 530M508 500Q505 524 486 535" />
        <path d="M521 488L540 447M518 439Q538 438 550 450M775 484L793 512M825 484L790 512M778 484Q778 505 790 518" />
        <path d="M855 484L903 532M920 484Q918 520 892 540M985 484L940 532M920 484Q924 520 950 540" />
        <path d="M265 733L229 692M224 694Q240 676 265 677M374 718L408 683M374 668Q396 668 412 686" />
        <path d="M333 776L297 741M283 774Q284 750 300 738M308 429L282 405M277 425Q276 410 286 402" />
        <path d="M128 447L154 474M128 486Q152 482 162 462M395 375V465M395 375H440M389 455L395 467 401 455M840 390V398M840 440V448" />
      </g>

      {/* structural posts */}
      <path d="M48 425V465M48 745V783M270 425V450M270 742V783" stroke="#e00000" strokeWidth="12" />
      <path d="M48 427V463M48 747V781M270 427V450M270 744V781" stroke="#400" strokeWidth="6" />
      {POSTS.map(([x, y]) => (
        <rect key={`${x}-${y}`} x={x - 5} y={y - 5} width="10" height="10" fill="#500" stroke="#f00000" strokeWidth="4" />
      ))}
    </g>
  );
}

function Paper() {
  return (
    <div className="mx-auto w-[1054px] max-w-full shadow-[0_0_8px_rgba(0,0,0,0.3)]">
      <div className="h-[3px] bg-[#9a9a9a]">
        <div className="h-px bg-[repeating-linear-gradient(90deg,#4d4d4d_0_4px,#9a9a9a_4px_6px)]" />
      </div>
      <svg
        className="block w-full bg-white"
        viewBox="433 208 1054 812"
        role="img"
        aria-label="Plan sheet with elevation and floor plan"
      >
        <defs>
          <pattern id="tiles" width="37" height="25" patternUnits="userSpaceOnUse">
            <path d="M0 0H37V25H0z" fill="#3030ff" stroke="none" />
            <path
              d="M2 2h4v9h-4zM13 2h5v9h-5zM27 2h6v9h-6zM6 15h5v9h-5zM19 15h6v9h-6zM31 15h4v9h-4z"
              fill="#fff"
              stroke="none"
            />
            <path d="M9 2v9M22 2v9M36 2v9M2 15v9M15 15v9M28 15v9" stroke="#b4b4ff" strokeWidth="3" />
          </pattern>
        </defs>
        <rect x="537.500" y="288.500" width="844" height="651" fill="none" stroke="#333" />
        <Elevation />
        <FloorPlan />
        <path d="M705 578.500H750M757 578.500H802M753.500 530V575M753.500 582V627" stroke="#222" />
        <path d="M750.500 575.500h6v6h-6z" fill="none" stroke="#222" />
      </svg>
    </div>
  );
}

function NavBar() {
  return (
    <aside className="absolute top-[258px] right-0.5 flex h-[136px] w-9 flex-col items-center rounded border-2 border-[#707070] bg-[#9c9c9c]">
      <svg className="h-full w-8" viewBox="0 0 96 396" fill="none" aria-hidden="true">
        <circle cx="79" cy="14" r="11" fill="#7c7c7c" />
        <path d="M75 10l8 8M83 10l-8 8" stroke="#bbb" strokeWidth="3" />
        <path d="M4 31H92M10 139H88" stroke="#8b8b8b" strokeWidth="3" />
        <path d="M30 62H58Q66 62 66 70V90Q66 98 60 104L52 114H32L14 98V78Q14 62 30 62z" stroke="#868686" strokeWidth="4" />
        <circle cx="40" cy="86" r="13" stroke="#868686" strokeWidth="4" />
        <path d="M28 112l6-14M46 98l6 12" stroke="#868686" strokeWidth="4" />
        <text x="47" y="124" fontSize="25" fontWeight="700" fill="#76889b" fontFamily="Open Sans, sans-serif">
          2D
        </text>
        <path
          d="M34 220C28 205 16 200 14 190c4-6 12 0 18 6L22 166c2-8 8-6 10 0l8 20-2-30c2-8 8-6 10 0l4 28 4-26c4-6 10-4 9 2l-3 30 8-18c4-4 9-2 8 4L66 204l-6 16z"
          stroke="#828282"
          strokeWidth="4"
        />
        <path d="M18 244L56 284M58 242L16 286" stroke="#828282" strokeWidth="4" />
        <path d="M12 238h12l-12 12zM62 238H50l12 12zM12 290v-12l12 12z" fill="#828282" />
        <circle cx="60" cy="284" r="14" fill="#a3a3a3" stroke="#828282" strokeWidth="4" />
        <path d="M70 294L84 308" stroke="#828282" strokeWidth="7" />
        <path d="M40 330H58L49 340z" fill="#828282" />
        <circle cx="79" cy="378" r="10" stroke="#828282" strokeWidth="4" />
        <path d="M73 375h12M75 381h8" stroke="#828282" strokeWidth="3" />
      </svg>
    </aside>
  );
}

function CommandLine() {
  return (
    <div className="absolute right-[145px] bottom-0 left-[145px] flex h-[27px] items-stretch rounded-t-sm border-t border-r border-[#4a515c] bg-[#4a515c]">
      <div className="flex w-[58px] shrink-0 items-center justify-between pr-1.5 pl-1">
        <svg className="h-[18px] w-[5px]" viewBox="0 0 5 18" aria-hidden="true">
          <path d="M1 0V18M4 0V18" stroke={LIGHT} strokeWidth="2" strokeDasharray="2 1" />
        </svg>
        <button type="button" aria-label="Close command line">
          <svg className="h-[9px] w-[9px]" viewBox="0 0 9 9" aria-hidden="true">
            <path d="M1 1l7 7M8 1l-7 7" stroke={LIGHT} strokeWidth="2" />
          </svg>
        </button>
        <button type="button" aria-label="Customize">
          <Small>
            <path d="M5 43L28 20" stroke={LIGHT} strokeWidth="8" strokeLinecap="round" />
            <path d="M22 20C20 8 28 1 40 2L33 10 38 15 46 8C48 20 40 29 28 26z" fill={LIGHT} />
          </Small>
        </button>
      </div>
      <div className="flex flex-1 items-center bg-[#dcdcdc]">
        <button type="button" aria-label="Recent commands" className="flex items-center gap-0.5 px-1">
          <svg className="h-[13px] w-4" viewBox="0 0 16 13" fill="none" aria-hidden="true">
            <path d="M.5.5h15v12H.5zM0 2h16M2.500 5.500l2.500 2-2.500 2M6 9.500h4" stroke="#666" />
          </svg>
          <svg className="h-1 w-2" viewBox="0 0 8 4" aria-hidden="true">
            <path d="M0 0h8L4 4z" fill="#555" />
          </svg>
        </button>
        <input
          type="text"
          aria-label="Command"
          placeholder="Type a command"
          className="ml-[3px] h-full flex-1 bg-transparent font-['DejaVu_Sans_Mono',monospace] text-xs italic placeholder:text-[#7a7a7a]"
        />
        <button type="button" aria-label="Command history" className="pr-1">
          <svg className="h-1 w-2" viewBox="0 0 8 4" aria-hidden="true">
            <path d="M0 4h8L4 0z" fill="#666" />
          </svg>
        </button>
      </div>
    </div>
  );
}

function Canvas() {
  return (
    <main className="relative min-h-[600px] flex-1 overflow-hidden bg-[#898989] pt-[23px]">
      <Paper />
      <div className="absolute top-2.5 right-2.5 flex items-end gap-2">
        <IconButton label="Minimize drawing" width="w-3">
          <svg className="h-3 w-3" viewBox="0 0 12 12" aria-hidden="true">
            <path d="M.5 7.500h11v3H.5z" fill="#fff" stroke="#333" />
          </svg>
        </IconButton>
        <IconButton label="Restore drawing" width="w-3">
          <svg className="h-3 w-3" viewBox="0 0 12 12" fill="none" aria-hidden="true">
            <path d="M3 1h8v8H9" stroke="#333" strokeWidth="2" />
            <path d="M3.500 1.500h7v7" stroke="#fff" />
            <path d="M1 3h8v8H1z" fill="#fff" stroke="#333" />
            <path d="M4 6h2v2H4z" fill="#777" stroke="#333" />
          </svg>
        </IconButton>
        <IconButton label="Close drawing" width="w-3">
          <svg className="h-3 w-3" viewBox="0 0 12 12" aria-hidden="true">
            <path d="M2 1l8 10M10 1l-8 10" stroke="#333" strokeWidth="5" />
            <path d="M2 1l8 10M10 1l-8 10" stroke="#fff" strokeWidth="3" />
          </svg>
        </IconButton>
      </div>
      <NavBar />
      <svg className="absolute bottom-4 left-[17px] h-[89px] w-[52px]" viewBox="0 0 52 89" fill="none" stroke="#1447e6" aria-hidden="true">
        <path d="M.5 1V87.500H50.500zM.5 79.500H8.500V87.500M2 27L8.500 33.500V40M15 27L8.500 33.500M28 74L40 86M41 73L28 86" />
      </svg>
      <CommandLine />
    </main>
  );
}

function StatusGroup({ children }: { children: ReactNode }) {
  return <div className="flex h-6 items-center bg-[#3b4453]">{children}</div>;
}

function StatusCaret({ label }: { label: string }) {
  return (
    <IconButton label={label} width="w-4">
      <svg className="h-1 w-[7px]" viewBox="0 0 7 4" aria-hidden="true">
        <path d="M0 0h7L3.500 4z" fill={LIGHT} />
      </svg>
    </IconButton>
  );
}

const annoShape = "M18 2L26 24 38 42 24 36 20 48 16 36 2 42 12 26z";

function StatusBar() {
  return (
    <footer className="flex h-[33px] shrink-0 items-start border-t-4 border-[#3b4453] text-white">
      <nav className="flex h-6 items-center">
        <IconButton label="Layout menu" width="w-[43px] pl-[5px]">
          <Burger />
        </IconButton>
        <Slash />
        <button type="button" className="w-[51px] text-center">
          Model
        </button>
        <Slash />
        <button type="button" className="w-[67px] text-center">
          Elevation
        </button>
        <div className="relative flex h-6 w-[47px] items-center justify-center">
          <span className="absolute inset-0 -skew-x-[20deg] bg-[#3b4453]" />
          <button type="button" className="relative font-bold">
            Plan
          </button>
        </div>
        <IconButton label="New layout" width="w-[42px]">
          <Plus />
        </IconButton>
        <Slash />
      </nav>
      <div className="ml-auto flex items-center gap-[3px] pt-0.5 pr-0.5">
        <button type="button" className="flex h-6 w-[41px] items-center justify-center bg-[#3b4453] text-xs">
          PAPER
        </button>
        <div className="flex gap-px">
          <StatusGroup>
            <IconButton label="Ortho mode" width="h-6 w-[23px] bg-[#5c8fc4]">
              <Small>
                <path d="M3 0V45H48M3 32H16V45" stroke="#fff" strokeWidth="3" />
              </Small>
            </IconButton>
            <IconButton label="Polar tracking" width="w-6">
              <Small>
                <path d="M36 12A20 20 0 1 0 40 34M20 26L46 4M20 26H48M38 16V34" stroke={LIGHT} strokeWidth="3" />
              </Small>
            </IconButton>
            <StatusCaret label="Polar options" />
            <IconButton label="Isometric drafting" width="w-6">
              <Small>
                <path d="M24 0V48" stroke="#4fce74" strokeWidth="3" />
                <path d="M4 4L44 42" stroke="#e27070" strokeWidth="3" />
                <path d="M19 20H29V30H19z" fill="#fff" />
              </Small>
            </IconButton>
            <StatusCaret label="Isometric options" />
          </StatusGroup>
          <StatusGroup>
            <IconButton label="Object snap tracking" width="w-6">
              <Small>
                <path d="M44 4L4 42H46" stroke={LIGHT} strokeWidth="3" />
                <path d="M19 18H29V28H19z" fill={LIGHT} />
              </Small>
            </IconButton>
            <IconButton label="Object snap" width="h-6 w-[22px] bg-[#5c8fc4]">
              <Small>
                <path d="M2 2H14V14H2zM18 8H46V46H8V18" stroke="#fff" strokeWidth="3" />
              </Small>
            </IconButton>
            <StatusCaret label="Object snap options" />
          </StatusGroup>
          <StatusGroup>
            <IconButton label="Lineweight" width="w-6">
              <Small>
                <path d="M0 6H48M0 18H24M28 18H48M0 30H30M34 30H48" stroke={LIGHT} strokeWidth="6" />
                <path d="M0 43H48" stroke={LIGHT} strokeWidth="8" />
              </Small>
            </IconButton>
          </StatusGroup>
        </div>
        <StatusGroup>
          <IconButton label="Selection cycling" width="w-6">
            <Small>
              <path d="M2 2H46V46H2z" stroke={LIGHT} strokeWidth="3" strokeDasharray="8 5" />
              <path d="M22 22H42V42H22zM28 28H36V36H28zM4 4L20 20" stroke={LIGHT} strokeWidth="3" />
              <path d="M2 2H12L2 12z" fill={LIGHT} />
            </Small>
          </IconButton>
          <IconButton label="Annotation visibility" width="w-6">
            <Small>
              <path d={annoShape} fill={LIGHT} />
              <circle cx="39" cy="10" r="7" stroke={LIGHT} strokeWidth="3" />
            </Small>
          </IconButton>
          <IconButton label="Auto scale" width="w-6">
            <Small>
              <path d={annoShape} fill={LIGHT} />
              <path d="M42 0L30 12H38L34 24 48 9H40z" fill={LIGHT} />
            </Small>
          </IconButton>
        </StatusGroup>
        <div className="flex gap-px">
          <StatusGroup>
            <IconButton label="Workspace switching" width="w-6">
              <Small>
                <circle cx="24" cy="24" r="12" stroke={LIGHT} strokeWidth="10" />
                <path d="M24 2V12M24 36V46M2 24H12M36 24H46M8 8L16 16M32 32L40 40M40 8L32 16M16 32L8 40" stroke={LIGHT} strokeWidth="8" />
              </Small>
            </IconButton>
            <StatusCaret label="Workspace options" />
          </StatusGroup>
          <StatusGroup>
            <IconButton label="Annotation monitor" width="w-6">
              <Plus />
            </IconButton>
          </StatusGroup>
        </div>
        <StatusGroup>
          <IconButton label="Isolate objects" width="w-6">
            <Small>
              <path d="M2 3H18V19H2zM22 28L30 45H14z" stroke={LIGHT} strokeWidth="3" />
              <circle cx="38" cy="20" r="9" stroke={LIGHT} strokeWidth="3" />
            </Small>
          </IconButton>
        </StatusGroup>
        <StatusGroup>
          <IconButton label="Drawing standards" width="w-7">
            <Small>
              <path d="M2 2H30L40 12V28H2z" fill="#2f6db5" />
              <path d="M2 28H26V44H2z" fill="#f5b324" />
              <path d="M16 2V24M2 16H40" stroke="#fff" strokeWidth="3" />
              <path d="M28 36l6 8 13-14" stroke="#4fce74" strokeWidth="5" />
            </Small>
          </IconButton>
          <IconButton label="Plot details" width="w-7">
            <Small>
              <path d="M10 12V2H38V12M8 36H2V13H46V36H40M2 24H46" stroke={LIGHT} strokeWidth="3" />
              <path d="M10 34H38V40H34V46H14V40H10z" stroke={ORANGE} strokeWidth="4" />
            </Small>
          </IconButton>
        </StatusGroup>
        <div className="flex gap-0.5">
          <StatusGroup>
            <IconButton label="Clean screen" width="w-6">
              <Small>
                <path d="M2 6H46V42H2z" stroke={LIGHT} strokeWidth="3" />
                <path d="M28 22L38 12M20 28L10 37" stroke={LIGHT} strokeWidth="3" />
                <path d="M29 11H40V22zM8 28V39H20z" fill={LIGHT} />
              </Small>
            </IconButton>
          </StatusGroup>
          <StatusGroup>
            <IconButton label="Customization" width="w-6">
              <Burger />
            </IconButton>
          </StatusGroup>
        </div>
      </div>
    </footer>
  );
}

export default function App() {
  return (
    <div className="flex h-screen flex-col overflow-hidden bg-[#222933] font-['Open_Sans','Noto_Sans',sans-serif] text-[11px] text-[#f1f1f1]">
      <TitleBar />
      <div className="pt-1">
        <RibbonTabs />
      </div>
      <Ribbon />
      <FileTabs />
      <Canvas />
      <StatusBar />
      <div className="flex h-0.5 shrink-0 justify-center bg-[#161616]">
        <span className="w-12 bg-[#555]" />
      </div>
    </div>
  );
}
